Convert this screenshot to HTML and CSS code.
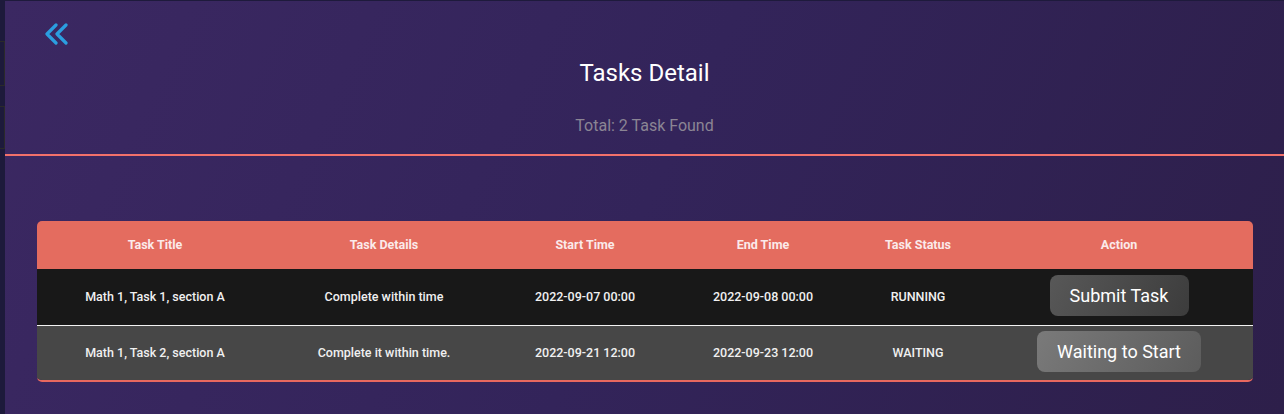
FILE: index.html
```
<!DOCTYPE html>
<html>
<head>
<meta charset="utf-8">
<link rel="stylesheet" href="styles.css">
</head>
<body>
<div class="app">
  <aside class="rail">
    <div class="rail-box rail-box-a"></div>
    <div class="rail-box rail-box-b"></div>
  </aside>
  <main class="main">
    <header class="top">
      <div class="back">
        <svg width="26" height="22" viewBox="0 0 26 22">
          <path d="M12 2 L3 11 L12 20" fill="none" stroke="#2b9ee0" stroke-width="3.2" stroke-linecap="round" stroke-linejoin="round"/>
          <path d="M22 2 L13 11 L22 20" fill="none" stroke="#2b9ee0" stroke-width="3.2" stroke-linecap="round" stroke-linejoin="round"/>
        </svg>
      </div>
      <h1 class="title">Tasks Detail</h1>
      <p class="subtitle">Total: 2 Task Found</p>
    </header>
    <section class="table-wrap">
      <table class="tasks">
        <colgroup>
          <col class="c1"><col class="c2"><col class="c3"><col class="c4"><col class="c5"><col class="c6">
        </colgroup>
        <thead>
          <tr>
            <th>Task Title</th>
            <th>Task Details</th>
            <th>Start Time</th>
            <th>End Time</th>
            <th>Task Status</th>
            <th>Action</th>
          </tr>
        </thead>
        <tbody>
          <tr class="row-dark">
            <td>Math 1, Task 1, section A</td>
            <td>Complete within time</td>
            <td>2022-09-07 00:00</td>
            <td>2022-09-08 00:00</td>
            <td class="status">RUNNING</td>
            <td><button class="btn btn-submit">Submit Task</button></td>
          </tr>
          <tr class="row-gray">
            <td>Math 1, Task 2, section A</td>
            <td>Complete it within time.</td>
            <td>2022-09-21 12:00</td>
            <td>2022-09-23 12:00</td>
            <td class="status">WAITING</td>
            <td><button class="btn btn-wait">Waiting to Start</button></td>
          </tr>
        </tbody>
      </table>
    </section>
  </main>
</div>
</body>
</html>
```
FILE: styles.css
```
* { box-sizing: border-box; }
html, body {
  margin: 0;
  padding: 0;
  width: 1284px;
  height: 414px;
  overflow: hidden;
  font-family: Roboto, "Liberation Sans", sans-serif;
}
.app {
  display: flex;
  width: 1284px;
  height: 414px;
  background: #1e1a3c;
}
.rail {
  width: 5px;
  flex: none;
  background: #1d1a3b;
  padding-top: 41px;
}
.rail-box {
  width: 5px;
  border: 1px solid #2a2a2a;
  border-left: none;
}
.rail-box-a { height: 45px; }
.rail-box-b { height: 43px; margin-top: 20px; }
.main {
  flex: 1;
  margin-top: 1px;
  background: linear-gradient(115deg, #3b2862 0%, #33245a 50%, #2d1f4a 100%);
}
.top {
  padding: 22px 0 18px;
  border-bottom: 2px solid #f2716b;
}
.back {
  padding-left: 39px;
  height: 22px;
}
.back svg { display: block; }
.title {
  margin: 13px 0 0;
  text-align: center;
  font-size: 24px;
  line-height: 30px;
  font-weight: 400;
  color: #ffffff;
}
.subtitle {
  margin: 28px 0 0;
  text-align: center;
  font-size: 16px;
  line-height: 20px;
  color: #8b8594;
}
.table-wrap {
  margin: 65px 31px 0 32px;
  border-radius: 5px;
  overflow: hidden;
  border-bottom: 2px solid #e8685f;
}
.tasks {
  width: 100%;
  border-collapse: collapse;
  table-layout: fixed;
}
.c1 { width: 236px; }
.c2 { width: 222px; }
.c3 { width: 180px; }
.c4 { width: 176px; }
.c5 { width: 134px; }
.c6 { width: 268px; }
.tasks th {
  background: #e46c5f;
  color: #fbeaea;
  font-size: 12.5px;
  font-weight: 700;
  height: 48px;
  text-align: center;
  padding: 0 0 2px;
}
.tasks td {
  color: #f0f0f0;
  font-size: 12.5px;
  font-weight: 500;
  text-align: center;
  padding: 0;
}
.tasks td.status { font-size: 12.5px; }
.row-dark td {
  background: #181818;
  height: 56px;
  border-bottom: 1px solid #f2f2f2;
}
.row-gray td {
  background: #474747;
  height: 55px;
}
.btn {
  border: none;
  border-radius: 8px;
  height: 41px;
  margin-bottom: 2px;
  font-family: Roboto, "Liberation Sans", sans-serif;
  font-size: 18px;
  color: #ffffff;
  padding: 0;
  vertical-align: middle;
}
.btn-submit {
  width: 139px;
  background: linear-gradient(120deg, #585858 0%, #3c3c3c 100%);
}
.btn-wait {
  width: 164px;
  background: linear-gradient(120deg, #7a7a7a 0%, #5c5c5c 100%);
}
```
